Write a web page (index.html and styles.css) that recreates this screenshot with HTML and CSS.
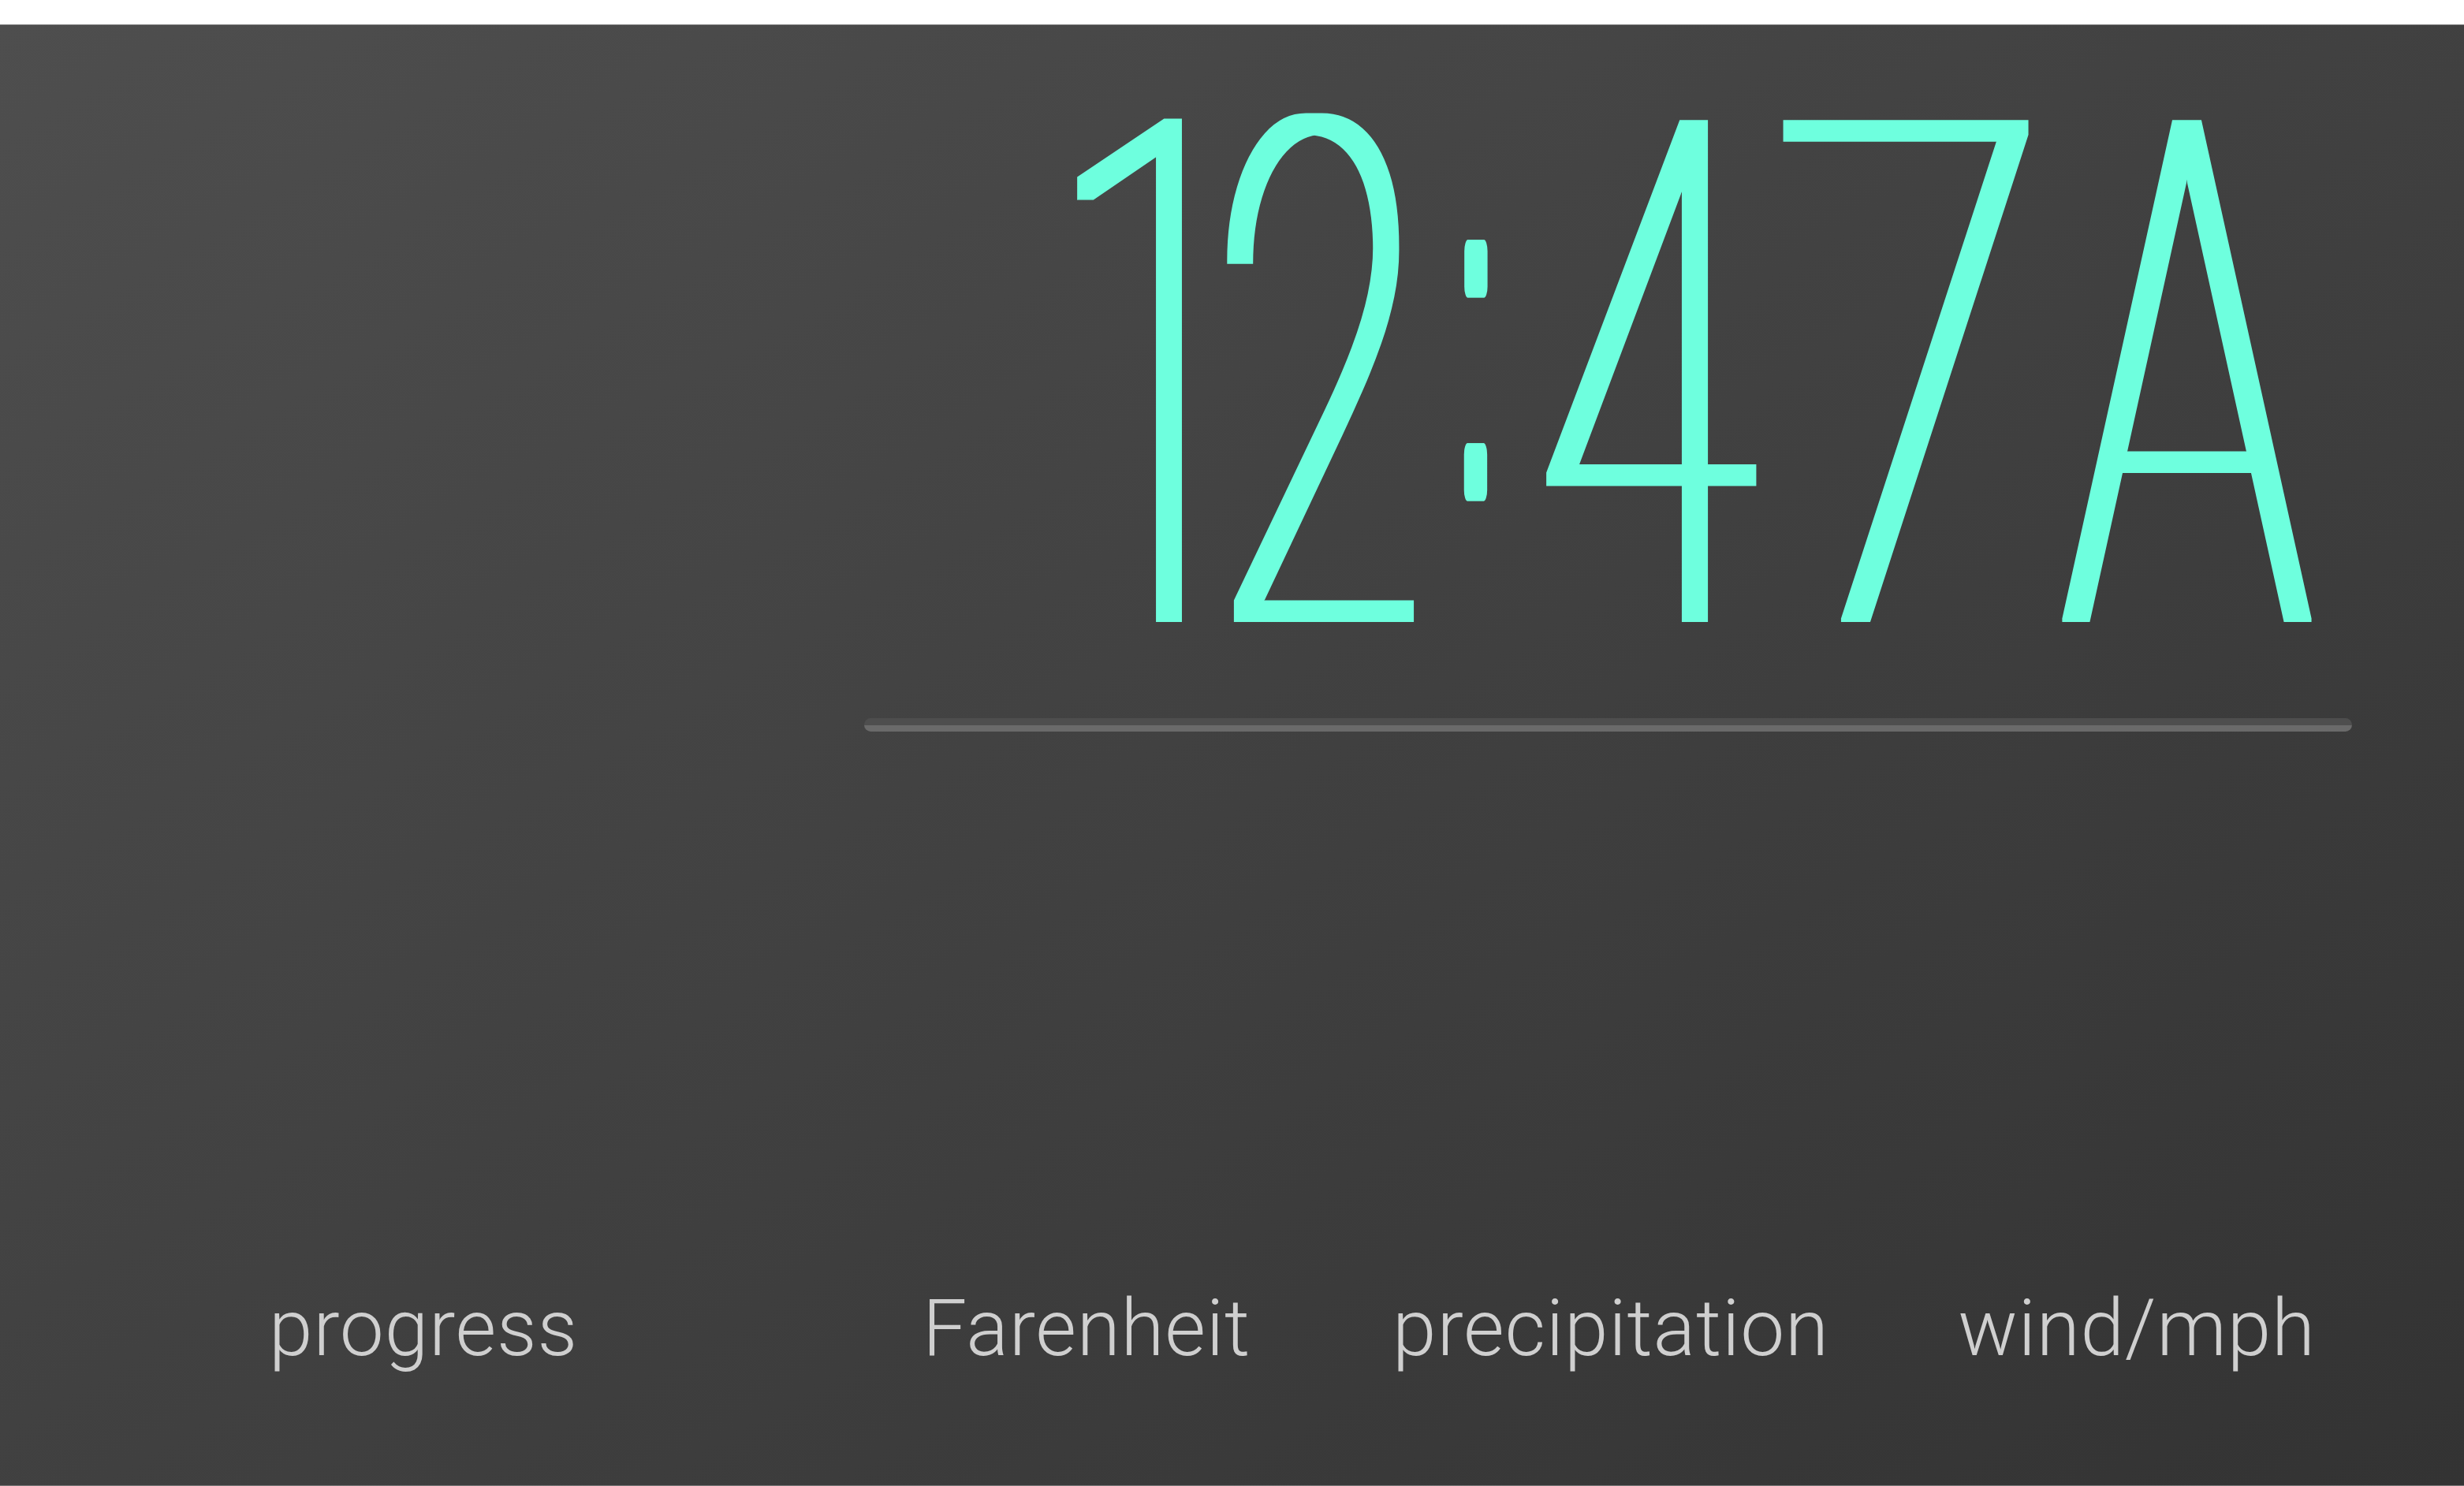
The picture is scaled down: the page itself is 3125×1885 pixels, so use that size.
FILE: index.html
```html
<!DOCTYPE html>
<html lang="en">
<head>
<meta charset="utf-8">
<title>Clock</title>
<link rel="stylesheet" href="styles.css">
</head>
<body>
<svg class="defs" width="0" height="0" aria-hidden="true">
  <filter id="thicken" x="-5%" y="-5%" width="110%" height="110%">
    <feMorphology operator="dilate" radius="10 2"/>
  </filter>
  <filter id="tall" x="-50%" y="-10%" width="200%" height="120%">
    <feMorphology operator="dilate" radius="0 20"/>
  </filter>
</svg>
<div class="screen">
  <div class="upper">
    <div class="sidebar"></div>
    <div class="panel">
      <div class="clock-wrap">
        <div class="clock"><span class="ch ch-1"><span class="g">1</span></span><span class="ch ch-2"><span class="g">2</span></span><span class="ch ch-colon"><span class="g">:</span></span><span class="ch ch-4"><span class="g">4</span></span><span class="ch ch-7"><span class="g">7</span></span><span class="ch ch-a"><span class="g">A</span></span></div>
      </div>
      <div class="track"></div>
    </div>
  </div>
  <div class="labels">
    <div class="label">progress</div>
    <div class="label">Farenheit</div>
    <div class="label">precipitation</div>
    <div class="label">wind/mph</div>
  </div>
</div>
</body>
</html>
```

FILE: styles.css
```css
html, body {
  margin: 0;
  padding: 0;
  background: #ffffff;
}

.defs {
  position: absolute;
  width: 0;
  height: 0;
  overflow: hidden;
}

.screen {
  margin-top: 31px;
  height: 1854px;
  box-sizing: border-box;
  border-top: 1px solid #6f6f6f;
  border-bottom: 1px solid #777777;
  background: linear-gradient(to bottom right, #4e4e4e, #333333);
  display: flex;
  flex-direction: column;
}

.upper {
  display: grid;
  grid-template-columns: 1096px 1887px;
}

.panel {
  display: flex;
  flex-direction: column;
  padding-top: 50px;
}

.clock-wrap {
  display: flex;
  justify-content: flex-end;
  padding-right: 46px;
  filter: url(#thicken);
}

.clock {
  display: flex;
  font-family: Roboto, "Open Sans", sans-serif;
  font-weight: 100;
  font-size: 890px;
  line-height: 0.9;
  color: #6effde;
}

.ch {
  display: flex;
  justify-content: center;
  flex: none;
}

.g {
  display: block;
  white-space: nowrap;
  transform-origin: 50% 50%;
}

.ch-1 { width: 183.6px; }
.ch-1 .g { letter-spacing: -191.8px; transform: scaleX(0.55); }

.ch-2 { width: 271.3px; margin-left: 23.4px; }
.ch-2 .g { letter-spacing: -32.4px; transform: scaleX(0.55); }

.ch-colon { width: 44px; margin-left: 51.3px; filter: url(#tall); }
.ch-colon .g {
  transform-origin: 50% 473px;
  transform: translateY(-86px) scale(0.196, 0.617);
}

.ch-4 { width: 294.2px; margin-left: 46.4px; }
.ch-4 .g { transform: scaleX(0.56); }

.ch-7 { width: 344.6px; margin-left: 0.8px; }
.ch-7 .g { letter-spacing: -41px; transform: scaleX(0.72); }

.ch-a { width: 341.7px; margin-left: 15.3px; }
.ch-a .g { letter-spacing: -25px; transform: scaleX(0.59); }

.track {
  margin-top: 28px;
  height: 17px;
  border-radius: 9px;
  background: linear-gradient(#4e4e4e 0, #4e4e4e 53%, #6a6a6a 53%, #6a6a6a 100%);
}

.labels {
  margin-top: auto;
  padding-bottom: 139px;
  display: grid;
  grid-template-columns: 1074px 608px 722px 612px;
}

.label {
  font-family: Roboto, "Open Sans", sans-serif;
  font-weight: 300;
  font-size: 100px;
  letter-spacing: 0.8px;
  line-height: 1.2;
  color: #cfcfcf;
  text-align: center;
}
```
